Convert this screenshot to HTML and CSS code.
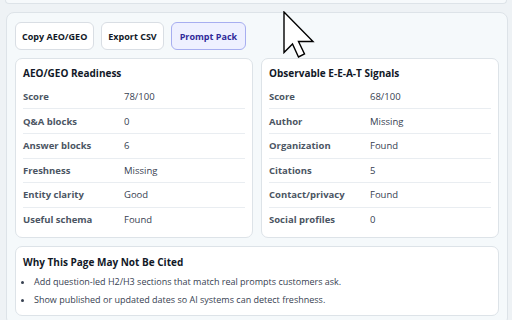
FILE: index.html
```html
<!DOCTYPE html>
<html lang="en">
<head>
    <meta charset="UTF-8">
    <meta name="viewport" content="width=device-width, initial-scale=1.0">
    <title>AEO/GEO Report</title>
    <link rel="stylesheet" href="styles.css">
</head>
<body>
    <div class="prev-card"></div>

    <div class="panel">
        <div class="actions">
            <button class="btn">Copy AEO/GEO</button>
            <button class="btn">Export CSV</button>
            <button class="btn btn-active">Prompt Pack</button>
        </div>

        <div class="cards">
            <div class="card">
                <h3>AEO/GEO Readiness</h3>
                <div class="row"><span class="label">Score</span><span class="value">78/100</span></div>
                <div class="row"><span class="label">Q&amp;A blocks</span><span class="value">0</span></div>
                <div class="row"><span class="label">Answer blocks</span><span class="value">6</span></div>
                <div class="row"><span class="label">Freshness</span><span class="value">Missing</span></div>
                <div class="row"><span class="label">Entity clarity</span><span class="value">Good</span></div>
                <div class="row"><span class="label">Useful schema</span><span class="value">Found</span></div>
            </div>

            <div class="card">
                <h3>Observable E-E-A-T Signals</h3>
                <div class="row"><span class="label">Score</span><span class="value">68/100</span></div>
                <div class="row"><span class="label">Author</span><span class="value">Missing</span></div>
                <div class="row"><span class="label">Organization</span><span class="value">Found</span></div>
                <div class="row"><span class="label">Citations</span><span class="value">5</span></div>
                <div class="row"><span class="label">Contact/privacy</span><span class="value">Found</span></div>
                <div class="row"><span class="label">Social profiles</span><span class="value">0</span></div>
            </div>
        </div>

        <div class="card card-wide">
            <h3>Why This Page May Not Be Cited</h3>
            <ul class="reasons">
                <li>Add question-led H2/H3 sections that match real prompts customers ask.</li>
                <li>Show published or updated dates so AI systems can detect freshness.</li>
            </ul>
        </div>
    </div>

    <svg class="cursor" width="34" height="50" viewBox="0 0 34 50">
        <path d="M1 1 L1 41.5 L9.5 33 L15.5 46 L21.5 43 L15.5 30.5 L30 30.5 Z" fill="#fff" stroke="#000" stroke-width="1.4" stroke-linejoin="miter"/>
    </svg>
</body>
</html>
```

FILE: styles.css
```css
body {
    margin: 0;
    background-color: #eef2f5;
    font-family: "Open Sans", "Liberation Sans", sans-serif;
    color: #1f2937;
    font-size: 9.5px;
    position: relative;
    height: 320px;
    overflow: hidden;
}

.prev-card {
    width: 500px;
    height: 3px;
    margin-left: 5px;
    background-color: #f6f9fb;
    border: 1px solid #dde3e8;
    border-top: none;
    border-radius: 0 0 7px 7px;
}

.panel {
    width: 484px;
    margin: 8px 0 0 6px;
    padding: 9px 8px;
    background-color: #f5f9fb;
    border: 1px solid #dde3e8;
    border-radius: 8px;
}

.actions {
    display: flex;
    gap: 7px;
}

.btn {
    height: 28px;
    padding: 0 6px;
    background-color: #fff;
    border: 1px solid #d9dee4;
    border-radius: 6px;
    font-family: inherit;
    font-size: 9px;
    font-weight: 700;
    color: #111827;
}

.btn-active {
    padding: 0 8px;
    background-color: #eef0ff;
    border-color: #a7aef0;
    color: #2f2a9a;
}

.cards {
    display: grid;
    grid-template-columns: 1fr 1fr;
    gap: 8px;
    margin-top: 8px;
}

.card {
    background-color: #fff;
    border: 1px solid #dde3e8;
    border-radius: 7px;
    padding: 6px 7px 6px 7px;
}

.card h3 {
    margin: 0 0 4px;
    font-size: 10px;
    font-weight: 700;
    color: #111827;
    line-height: 16px;
}

.row {
    box-sizing: border-box;
    display: flex;
    height: 24.6px;
    align-items: center;
    border-top: 1px solid #e9edf1;
}

.row:first-of-type {
    border-top: none;
    height: 23.4px;
}

.label {
    width: 101px;
    font-weight: 700;
    color: #4b5563;
}

.value {
    color: #374151;
}

.card-wide {
    margin-top: 8px;
    padding-top: 7px;
}

.card-wide h3 {
    margin-bottom: 3px;
}

.reasons {
    margin: 0;
    padding-left: 11px;
    font-size: 9px;
    color: #374151;
}

.reasons li {
    line-height: 18px;
}

.cursor {
    position: absolute;
    left: 283px;
    top: 11px;
}
```
